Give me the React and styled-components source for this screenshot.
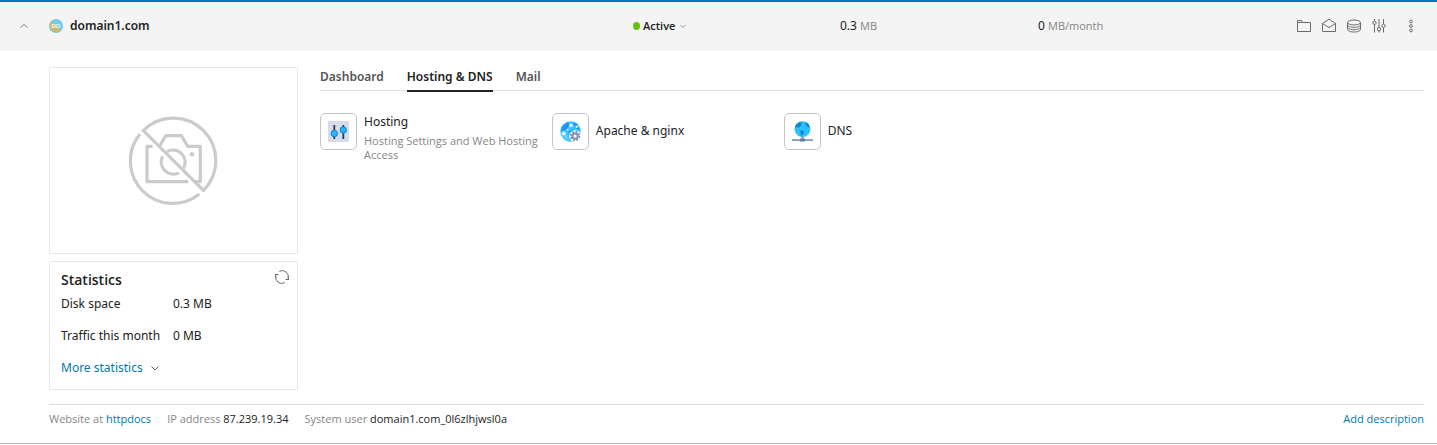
import React from 'react';
import styled, { createGlobalStyle, css } from 'styled-components';

const GlobalStyle = createGlobalStyle`
  *, *::before, *::after { box-sizing: border-box; }
  body {
    margin: 0;
    background: #fff;
    color: #222;
    font-family: "Noto Sans", "Open Sans", sans-serif;
    font-size: 12px;
    line-height: 20px;
  }
  button {
    font: inherit;
    color: inherit;
    background: none;
    border: 0;
    padding: 0;
    cursor: pointer;
  }
  svg { display: block; flex: none; }
`;

const smallText = css`
  font-family: "Open Sans", "Noto Sans", sans-serif;
  font-size: 11px;
`;

const Card = styled.article`
  border-top: 2px solid #0078b4;
  border-bottom: 1px solid #b8b8b8;
`;

const Header = styled.header`
  display: grid;
  grid-template-columns: minmax(0, 1fr) 207px 198px 258px 123px;
  align-items: center;
  height: 49px;
  padding: 0 18px 2px;
  background: #f4f4f4;
`;

const DomainCell = styled.div`
  display: flex;
  align-items: center;
`;

const CollapseButton = styled.button`
  display: grid;
  place-items: center;
  width: 11px;
  height: 16px;
  margin-right: 20px;
  color: #777;
`;

const DomainName = styled.h1`
  margin: 0 0 0 7px;
  font-size: 12px;
  line-height: 20px;
  font-weight: 600;
`;

const StatusButton = styled.button`
  ${smallText}
  display: flex;
  align-items: center;
  justify-self: start;
  gap: 3px;
  font-weight: 600;
  color: #222;
`;

const StatusDot = styled.span`
  width: 7px;
  height: 8px;
  border-radius: 50%;
  background: #67c00c;
`;

const StatusChevron = styled.span`
  margin-left: 2px;
  color: #777;
`;

const Amount = styled.span`
  color: #222;
`;

const Unit = styled.span`
  ${smallText}
  color: #868686;
`;

const Actions = styled.div`
  display: flex;
  justify-content: space-between;
`;

const ActionGroup = styled.div`
  display: flex;
  gap: 9px;
`;

const IconButton = styled.button`
  display: grid;
  place-items: center;
  width: 16px;
  height: 16px;
  color: #6c6c6c;
`;

const Body = styled.div`
  display: grid;
  grid-template-columns: 249px minmax(0, 1fr);
  column-gap: 22px;
  padding: 16px 13px 0 49px;
`;

const Sidebar = styled.aside`
  display: flex;
  flex-direction: column;
  gap: 7px;
`;

const Preview = styled.div`
  display: grid;
  place-items: center;
  height: 187px;
  border: 1px solid #e8e8e8;
  border-radius: 1px;
`;

const Statistics = styled.section`
  padding: 7px 7px 11px 11px;
  border: 1px solid #e8e8e8;
  border-radius: 1px;
`;

const StatisticsHead = styled.div`
  display: flex;
  justify-content: space-between;
  align-items: flex-start;
`;

const StatisticsTitle = styled.h2`
  margin: 0;
  font-family: "Open Sans", "Noto Sans", sans-serif;
  font-size: 14px;
  line-height: 22px;
  font-weight: 600;
`;

const StatisticsTable = styled.table`
  width: 100%;
  margin-top: 3px;
  border-collapse: collapse;
`;

const StatLabel = styled.th`
  width: 112px;
  padding: 0 0 12px;
  font-weight: 400;
  text-align: left;
  white-space: nowrap;
`;

const StatValue = styled.td`
  padding: 0 0 12px;
`;

const MoreButton = styled.button`
  display: flex;
  align-items: center;
  gap: 8px;
  color: #0078b4;
`;

const MoreChevron = styled.span`
  color: #666;
`;

const Tabs = styled.nav`
  display: flex;
  gap: 23px;
  height: 24px;
  border-bottom: 1px solid #ddd;
`;

const Tab = styled.a`
  height: 25px;
  font-weight: 600;
  text-decoration: none;
  color: ${(p) => (p.$active ? '#222' : '#555')};
  border-bottom: 2px solid ${(p) => (p.$active ? '#222' : 'transparent')};
`;

const Tools = styled.div`
  display: grid;
  grid-template-columns: repeat(3, 21%);
  padding-top: 22px;
`;

const Tool = styled.a`
  display: flex;
  align-items: flex-start;
  gap: 7px;
  padding-right: 8px;
  color: #222;
  text-decoration: none;
`;

const ToolIcon = styled.span`
  display: grid;
  place-items: center;
  flex: none;
  width: 37px;
  height: 37px;
  border: 1px solid #c5c5c5;
  border-radius: 5px;
`;

const ToolText = styled.span`
  display: flex;
  flex-direction: column;
  justify-content: ${(p) => (p.$single ? 'center' : 'flex-start')};
  min-height: ${(p) => (p.$single ? '34px' : '0')};
`;

const ToolName = styled.span`
  line-height: 17px;
`;

const ToolNote = styled.span`
  ${smallText}
  margin-top: 4px;
  line-height: 14px;
  color: #868686;
`;

const Footer = styled.footer`
  ${smallText}
  display: flex;
  align-items: flex-start;
  gap: 16px;
  margin: 14px 13px 0 49px;
  padding: 4px 0 14px;
  border-top: 1px solid #ddd;
  color: #868686;
`;

const FooterValue = styled.span`
  color: #222;
`;

const Link = styled.a`
  color: #0078b4;
  text-decoration: none;
`;

const AddLink = styled(Link)`
  margin-left: auto;
`;

const Chevron = ({ size = 8, up = false }) => (
  <svg width={size} height={size} viewBox="0 0 8 8" fill="none" stroke="currentColor" aria-hidden="true">
    <path d={up ? 'M.5 5.8 4 2.3l3.5 3.5' : 'M.5 2.5 4 6l3.5-3.5'} />
  </svg>
);

const Avatar = () => (
  <svg width="14" height="14" viewBox="0 0 14 14" aria-hidden="true">
    <circle cx="7" cy="7" r="7" fill="#70cce8" />
    <path d="M2.1 2.1a7 7 0 0 0 9.8 9.8z" fill="#d2b866" />
    <text x="7" y="9" textAnchor="middle" fontSize="6" fontWeight="600" fill="#fff">DO</text>
  </svg>
);

const Stroke = ({ children }) => (
  <svg width="16" height="16" viewBox="0 0 16 16" fill="none" stroke="currentColor" aria-hidden="true">
    {children}
  </svg>
);

const FolderIcon = () => (
  <Stroke><path d="M1.500 13.500v-11h4l1 2h8v9zM1.500 4.500h5" /></Stroke>
);

const MailIcon = () => (
  <Stroke><path d="M1.500 5.500 8 1.200l6.500 4.300v8h-13zM1.500 5.500 8 9.600l6.500-4.100" /></Stroke>
);

const DatabaseIcon = () => (
  <Stroke>
    <ellipse cx="8" cy="4.500" rx="6.500" ry="2.500" />
    <path d="M1.500 4.500v7c0 1.400 2.900 2.500 6.500 2.500s6.500-1.100 6.500-2.500v-7M1.500 7c0 1.400 2.900 2.400 6.500 2.400s6.500-1 6.500-2.400M1.500 9.300c0 1.400 2.900 2.400 6.500 2.400s6.500-1 6.500-2.400" />
  </Stroke>
);

const SlidersIcon = () => (
  <Stroke>
    <path d="M3.500 1v2M3.500 6.500v8M8 1v8.500M8 13v1.500M12.500 1v5M12.500 9.500v5" />
    <circle cx="3.500" cy="4.800" r="1.700" />
    <circle cx="8" cy="11.200" r="1.700" />
    <circle cx="12.500" cy="7.800" r="1.700" />
  </Stroke>
);

const DotsIcon = () => (
  <Stroke>
    <circle cx="8" cy="3.500" r="1.400" />
    <circle cx="8" cy="8" r="1.400" />
    <circle cx="8" cy="12.500" r="1.400" />
  </Stroke>
);

const RefreshIcon = () => (
  <Stroke>
    <path d="M5.200 2.300A6.300 6.300 0 0 1 14.200 9.500M10.800 13.700A6.300 6.300 0 0 1 1.800 6.500" />
    <path d="M14.300 7.500v3M11.500 10.500h3.700M1.700 8.500v-3M4.500 5.500H.8" />
  </Stroke>
);

const NoPhotoIcon = () => (
  <svg width="89" height="89" viewBox="0 0 89 89" fill="none" stroke="#cbcbcb" strokeWidth="3.200" aria-hidden="true">
    <path d="M14.300 14.600A42.400 42.400 0 0 1 74.500 74.400zM11 18A42.400 42.400 0 0 0 70.300 78" />
    <path d="M31 29.500 36.700 19.700H52.300L58.700 30.300H71.300V65.700H66M59.300 65.700H18V30.300H23.500" strokeLinejoin="round" />
    <path d="M38 35.500A12.300 12.300 0 0 1 54.500 52.500M33.600 40.300A12.300 12.300 0 0 0 50 56.900" />
    <circle cx="63" cy="38.300" r="2.300" fill="#cbcbcb" stroke="none" />
  </svg>
);

const HostingIcon = () => (
  <svg width="21" height="21" viewBox="0 0 21 21" aria-hidden="true">
    <path d="M0 0h21v21H0z" fill="#d5ddeb" />
    <path d="M6.300 4v14M15.300 4v14" stroke="#2d3c58" strokeWidth="1.800" />
    <circle cx="6.300" cy="12.500" r="3.200" fill="#29b4ff" stroke="#087ee8" />
    <circle cx="15.300" cy="9" r="3.200" fill="#29b4ff" stroke="#087ee8" />
  </svg>
);

const ApacheIcon = () => (
  <svg width="21" height="21" viewBox="0 0 22 22" aria-hidden="true">
    <circle cx="11" cy="11" r="10.700" fill="#3cc4ff" />
    <path d="M2 6 8 1l2 2-2 5-4 2-3 0zM14 1l4 2 3 6-4-1-3-4zM9 11l4-2 2 2-3 4-3-1z" fill="#1d98f2" />
    <path d="M1 13l5 0 3 6-5-2z" fill="#67d3ff" />
    <g fill="#e2f7ff">
      <circle cx="11.500" cy="4.500" r="1.900" />
      <circle cx="4" cy="13" r="2" />
      <circle cx="17.500" cy="6" r="1.300" />
      <circle cx="8" cy="9" r="1" />
    </g>
    <circle cx="15.800" cy="15.800" r="6.200" fill="#fff" />
    <circle cx="15.800" cy="15.800" r="4.500" fill="none" stroke="#8493b0" strokeWidth="2" strokeDasharray="1.900 1.634" />
    <circle cx="15.800" cy="15.800" r="2.800" fill="none" stroke="#8493b0" strokeWidth="2.200" />
  </svg>
);

const DnsIcon = () => (
  <svg width="21" height="21" viewBox="0 0 22 22" aria-hidden="true">
    <path d="M10 16h2v3h-2z" fill="#6f83a5" />
    <path d="M0 19h22v2H0z" fill="#8b9dbd" />
    <path d="M8.500 18.500h5v3h-5z" fill="#657a9f" />
    <circle cx="11" cy="8.500" r="8.300" fill="#2cc0ff" />
    <path d="M4 4l4-3 3 1-2 2 1 1-3 2-2-1-2 2zM14 1l3 2 2 4-3-1-2-2zM8 10l3 0 2 2-3 4-1-3z" fill="#0d86d4" />
  </svg>
);

const actions = [
  ['Files', FolderIcon],
  ['Mail', MailIcon],
  ['Databases', DatabaseIcon],
  ['Hosting settings', SlidersIcon],
];

const tools = [
  { name: 'Hosting', note: 'Hosting Settings and Web Hosting Access', Icon: HostingIcon },
  { name: 'Apache & nginx', Icon: ApacheIcon },
  { name: 'DNS', Icon: DnsIcon },
];

export default function App() {
  return (
    <>
      <GlobalStyle />
      <Card>
        <Header>
          <DomainCell>
            <CollapseButton aria-label="Collapse" aria-expanded="true"><Chevron up /></CollapseButton>
            <Avatar />
            <DomainName>domain1.com</DomainName>
          </DomainCell>
          <StatusButton>
            <StatusDot />
            Active
            <StatusChevron><Chevron size={6} /></StatusChevron>
          </StatusButton>
          <div><Amount>0.3</Amount> <Unit>MB</Unit></div>
          <div><Amount>0</Amount> <Unit>MB/month</Unit></div>
          <Actions>
            <ActionGroup>
              {actions.map(([label, Icon]) => (
                <IconButton key={label} aria-label={label}><Icon /></IconButton>
              ))}
            </ActionGroup>
            <IconButton aria-label="More actions"><DotsIcon /></IconButton>
          </Actions>
        </Header>

        <Body>
          <Sidebar>
            <Preview><NoPhotoIcon /></Preview>
            <Statistics>
              <StatisticsHead>
                <StatisticsTitle>Statistics</StatisticsTitle>
                <IconButton aria-label="Refresh statistics"><RefreshIcon /></IconButton>
              </StatisticsHead>
              <StatisticsTable>
                <tbody>
                  <tr><StatLabel scope="row">Disk space</StatLabel><StatValue>0.3 MB</StatValue></tr>
                  <tr><StatLabel scope="row">Traffic this month</StatLabel><StatValue>0 MB</StatValue></tr>
                </tbody>
              </StatisticsTable>
              <MoreButton>More statistics<MoreChevron><Chevron /></MoreChevron></MoreButton>
            </Statistics>
          </Sidebar>

          <main>
            <Tabs>
              <Tab href="#dashboard">Dashboard</Tab>
              <Tab href="#hosting" $active aria-current="page">Hosting &amp; DNS</Tab>
              <Tab href="#mail">Mail</Tab>
            </Tabs>
            <Tools>
              {tools.map(({ name, note, Icon }) => (
                <Tool key={name} href="#tool">
                  <ToolIcon><Icon /></ToolIcon>
                  <ToolText $single={!note}>
                    <ToolName>{name}</ToolName>
                    {note && <ToolNote>{note}</ToolNote>}
                  </ToolText>
                </Tool>
              ))}
            </Tools>
          </main>
        </Body>

        <Footer>
          <span>Website at <Link href="#httpdocs">httpdocs</Link></span>
          <span>IP address <FooterValue>87.239.19.34</FooterValue></span>
          <span>System user <FooterValue>domain1.com_0l6zlhjwsl0a</FooterValue></span>
          <AddLink href="#description">Add description</AddLink>
        </Footer>
      </Card>
    </>
  );
}
